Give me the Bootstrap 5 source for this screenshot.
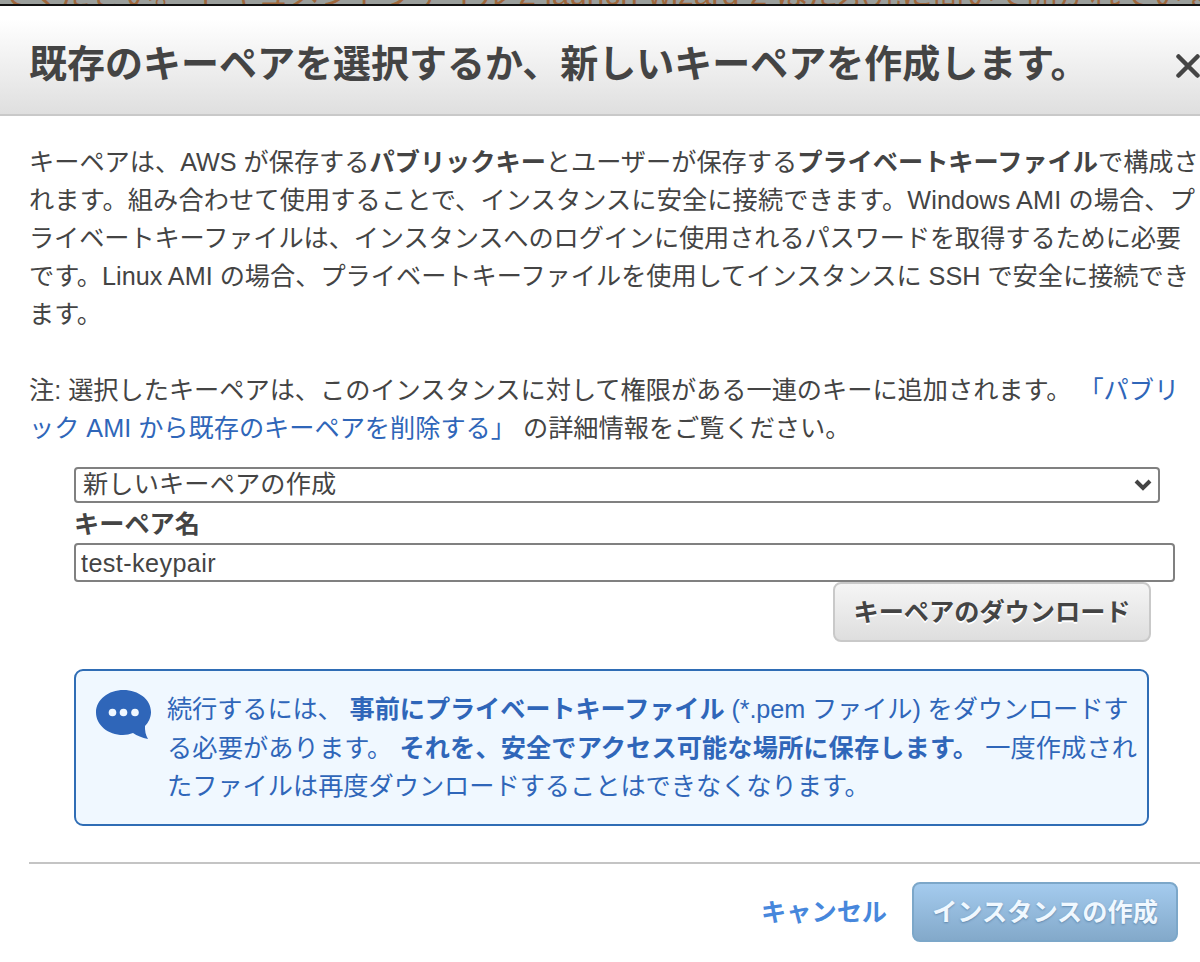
<!DOCTYPE html>
<html lang="ja">
<head>
  <meta charset="UTF-8">
  <meta name="viewport" content="width=device-width, initial-scale=1.0">
  <title>キーペアの選択</title>
  <link href="https://cdn.jsdelivr.net/npm/bootstrap@5.3.0/dist/css/bootstrap.min.css" rel="stylesheet">
  <style>
    body {
      font-family: "Liberation Sans", "Noto Sans CJK JP", sans-serif;
      font-size: 25.2px;
      line-height: 38px;
      color: #444;
      width: 1200px;
      height: 962px;
      overflow: hidden;
    }
    .page-behind {
      height: 6px;
      background: #9b9f9c;
      border-bottom: 2px solid #111;
      color: #a0683c;
      font-size: 31.5px;
      line-height: 30px;
    }
    .page-behind span {
      margin-top: -21px;
      margin-left: -2px;
    }
    .dialog-head {
      height: 110px;
      padding: 0 0 0 29px;
      background: linear-gradient(#fff 12%, #dfdfdf);
      border-bottom: 2px solid #c9c9c9;
    }
    .dialog-head h1 {
      font-size: 38px;
      line-height: 57px;
      font-weight: bold;
      margin: 9px 0 0;
    }
    .close-icon {
      margin-right: -1px;
      margin-top: 12px;
    }
    .dialog-text {
      padding: 27px 0 0 29px;
    }
    .dialog-text p {
      margin-bottom: 38px;
    }
    /* even out the line widths */
    .loose {
      letter-spacing: .13px;
    }
    .tight {
      letter-spacing: -.09px;
    }
    a, a:hover {
      color: #2f66b9;
      text-decoration: none;
    }
    .key-form {
      margin: 0 0 0 74px;
    }
    .key-select {
      width: 1086px;
      height: 36px;
      padding: 0 6px 3px 7px;
      border: 2px solid #808080;
      border-radius: 4px;
      letter-spacing: .15px;
    }
    .key-select svg {
      margin-top: 3px;
    }
    .key-label {
      line-height: 40px;
      font-weight: bold;
      padding-top: 1px;
      margin-bottom: -1px;
    }
    .key-input, .key-input:focus {
      width: 1101px;
      height: 39px;
      padding: 1px 5px 0;
      border: 2px solid #808080;
      border-radius: 4px;
      font-size: 25.2px;
      letter-spacing: .4px;
      color: #444;
    }
    .btn-aws {
      --bs-btn-font-size: 25.2px;
      --bs-btn-line-height: 38px;
      --bs-btn-padding-x: 0;
      --bs-btn-padding-y: 0;
      --bs-btn-border-radius: 8px;
      --bs-btn-border-width: 2px;
      font-weight: bold;
      height: 60px;
    }
    .btn-download {
      width: 318px;
      margin-right: 49px;
      color: #444;
      background: linear-gradient(#f5f5f5, #dedede);
      border-color: #c9c9c9;
      text-shadow: 0 2px 0 #fff;
    }
    .info-box {
      width: 1075px;
      height: 157px;
      margin: 27px 0 0 74px;
      padding: 19px 0 0 20px;
      border: 2px solid #2f6db5;
      border-radius: 9px;
      background: #f0f8ff;
      color: #2f66b9;
      line-height: 38.6px;
    }
    .info-box svg {
      margin-right: 15px;
    }
    .dialog-foot {
      margin: 36px 0 0 29px;
      padding: 18px 22px 0 0;
      border-top: 2px solid #c4c4c4;
    }
    .cancel-link {
      color: #4787dc;
      font-weight: bold;
      margin-right: 25px;
    }
    .btn-launch {
      width: 266px;
      color: #f0f8ff;
      background: linear-gradient(#a4cbee, #83a9ca);
      border-color: #7ca7c9;
      text-shadow: 0 1px 2px rgba(50, 90, 130, .5);
    }
  </style>
</head>
<body class="bg-white">

<div class="page-behind d-flex overflow-hidden text-nowrap">
  <span>てください。 ドキュメントファイル 2 launch-wizard-2 はたぶ先に間いて開かれている</span>
</div>

<div class="dialog-head d-flex align-items-center justify-content-between overflow-hidden">
  <h1 class="text-nowrap">既存のキーペアを選択するか、新しいキーペアを作成します。</h1>
  <svg class="close-icon" width="26" height="26" viewBox="0 0 26 26" fill="none" stroke="#444" stroke-width="4.500" stroke-linecap="round">
    <path d="M3.500 3.500L22.500 22.500M22.500 3.500L3.500 22.500"/>
  </svg>
</div>

<div class="dialog-text text-nowrap">
  <p>キーペアは、AWS が保存する<b>パブリックキー</b>とユーザーが保存する<b>プライベートキーファイル</b>で構成さ<br>
    <span class="loose">れます。組み合わせて使用することで、インスタンスに安全に接続できます。Windows AMI の場合、プ</span><br>
    <span class="tight">ライベートキーファイルは、インスタンスへのログインに使用されるパスワードを取得するために必要</span><br>
    です。Linux AMI の場合、プライベートキーファイルを使用してインスタンスに SSH で安全に接続でき<br>
    ます。</p>
  <p class="mb-0">注: 選択したキーペアは、このインスタンスに対して権限がある一連のキーに追加されます。 <a href="#">「パブリ<br>
    ック AMI から既存のキーペアを削除する」</a> の詳細情報をご覧ください。</p>
</div>

<div class="key-form d-flex flex-column mt-3 pt-1">
  <div class="key-select d-flex align-items-center justify-content-between">
    <span>新しいキーペアの作成</span>
    <svg width="18" height="14" viewBox="0 0 18 14" fill="none" stroke="#444" stroke-width="4">
      <path d="M2 3L9 10L16 3"/>
    </svg>
  </div>
  <label class="key-label" for="key-name">キーペア名</label>
  <input class="key-input form-control" type="text" id="key-name" value="test-keypair">
  <button class="btn btn-aws btn-download align-self-end" type="button">キーペアのダウンロード</button>
</div>

<div class="info-box d-flex align-items-start text-nowrap">
  <svg width="56" height="50" viewBox="0 0 56 50">
    <path d="M27.500 0C42.500 0 55 9.500 55 22C55 28 52 33 49 36Q48.500 43 52 49Q43 47 37 43Q32 45 27 45C12 45 0 35 0 22.500C0 9.500 12.500 0 27.500 0Z" fill="#2f66b9"/>
    <g fill="#f0f8ff">
      <circle cx="16.500" cy="22.500" r="3.800"/>
      <circle cx="27.500" cy="22.500" r="3.800"/>
      <circle cx="39" cy="22.500" r="3.800"/>
    </g>
  </svg>
  <div><span class="tight">続行するには、 <b>事前にプライベートキーファイル</b> (*.pem ファイル) をダウンロードす</span><br>
    <span class="loose">る必要があります。 <b>それを、安全でアクセス可能な場所に保存します。</b> 一度作成され</span><br>
    たファイルは再度ダウンロードすることはできなくなります。</div>
</div>

<div class="dialog-foot d-flex align-items-center justify-content-end">
  <a class="cancel-link" href="#">キャンセル</a>
  <button class="btn btn-aws btn-launch" type="button">インスタンスの作成</button>
</div>

<script src="https://cdn.jsdelivr.net/npm/bootstrap@5.3.0/dist/js/bootstrap.bundle.min.js"></script>
</body>
</html>
